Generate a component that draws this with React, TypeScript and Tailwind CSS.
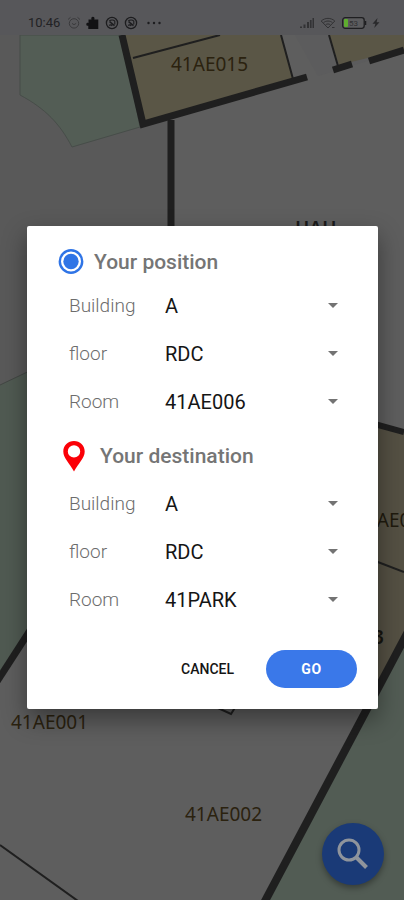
import React, { useState } from 'react';

interface PlaceFieldsProps {
  idPrefix: string;
  rooms: string[];
}

interface SelectRowProps {
  id: string;
  label: string;
  options: string[];
}

const SelectRow: React.FC<SelectRowProps> = ({ id, label, options }) => {
  const [value, setValue] = useState(options[0]);

  return (
    <div className="flex h-12 items-center pl-[42px] pr-8">
      <label htmlFor={id} className="w-24 shrink-0 text-[19px] font-light leading-6 text-[#6c6c6c]">
        {label}
      </label>
      <div className="relative flex-1">
        <select
          id={id}
          value={value}
          onChange={e => setValue(e.target.value)}
          className="h-10 w-full appearance-none bg-transparent text-[20px] leading-6 text-[#151515] outline-none"
        >
          {options.map(option => (
            <option key={option}>{option}</option>
          ))}
        </select>
        <svg
          viewBox="0 0 10 5"
          className="pointer-events-none absolute right-2 top-[17px] h-[5px] w-[10px]"
          fill="#737373"
          aria-hidden="true"
        >
          <path d="M0 0h10L5 5z" />
        </svg>
      </div>
    </div>
  );
};

const PlaceFields: React.FC<PlaceFieldsProps> = ({ idPrefix, rooms }) => (
  <div>
    <SelectRow id={`${idPrefix}-building`} label="Building" options={['A', 'B', 'C']} />
    <SelectRow id={`${idPrefix}-floor`} label="floor" options={['RDC', '1', '2']} />
    <SelectRow id={`${idPrefix}-room`} label="Room" options={rooms} />
  </div>
);

const CompassGlyph = () => (
  <svg viewBox="0 0 14 14" className="h-[14px] w-[14px]" fill="none" stroke="#1d1d1f" aria-hidden="true">
    <circle cx="7" cy="7" r="5.6" strokeWidth="1.3" />
    <path d="M4.2 5.2C5.6 3.6 8.6 3.6 9.8 5.2V8.5" strokeWidth="1.1" />
    <path d="M4.6 5.6L9.5 9.6M4.2 9.6C5.2 8.6 6.4 8.6 7.2 9.8" strokeWidth="1.4" />
  </svg>
);

const StatusBar = () => (
  <header className="flex h-[35px] items-center justify-between bg-[#57575a] pl-7 pr-6 pt-[11px]">
    <div className="flex items-center gap-[5px]">
      <span className="text-[13px] leading-4 text-[#222224]">10:46</span>
      <svg viewBox="0 0 14 14" className="ml-[2px] h-[14px] w-[14px]" fill="none" stroke="#3a3a3c" aria-hidden="true">
        <circle cx="7" cy="7.4" r="4.7" />
        <path d="M1 3.5L3.5 1.3M13 3.5L10.5 1.3M5 7.4l2 1.3 2.2-1.3" />
      </svg>
      <svg viewBox="0 0 14 14" className="h-[14px] w-[14px]" fill="#121214" aria-hidden="true">
        <path d="M2.5 3.5h3C4.8 1.8 5.7.8 6.9.8s2.1 1 1.4 2.7h4V13h-10V9.8C.9 10 .3 9.2.3 8.2S1 6.6 2.5 6.9z" />
      </svg>
      <CompassGlyph />
      <CompassGlyph />
      <svg viewBox="0 0 14 14" className="ml-1 h-[14px] w-[14px]" fill="#1d1d1f" aria-hidden="true">
        <circle cx="1.5" cy="7" r="1.2" />
        <circle cx="7" cy="7" r="1.2" />
        <circle cx="12.5" cy="7" r="1.2" />
      </svg>
    </div>
    <div className="flex items-center gap-[5px]">
      <svg viewBox="0 0 16 14" className="h-[14px] w-4" fill="#323234" aria-hidden="true">
        <path d="M1 10.5h2V12H1zM4.5 8.5h2V12h-2zM8 6h2v6H8zM10.9 4h1.7v8h-1.7zM13.5 2H15v10h-1.5z" />
      </svg>
      <svg viewBox="0 0 16 14" className="h-[14px] w-4" fill="none" stroke="#323234" aria-hidden="true">
        <path d="M1.2 5C5 1.5 11 1.5 14.8 5L8 12z" />
        <path d="M3.5 6.7C6 4.5 10 4.5 12.5 6.7M5.6 8.9C7 7.6 9 7.6 10.4 8.9" />
        <path d="M12 11.5h2.5" />
      </svg>
      <svg viewBox="0 0 26 14" className="h-[14px] w-[26px]" aria-hidden="true">
        <rect x="1.7" y="1.7" width="21.5" height="10.6" rx="2.5" fill="#5c5c5e" stroke="#1f1f21" strokeWidth="1.3" />
        <rect x="3" y="3" width="4" height="8" rx="1" fill="#5fae2f" />
        <path d="M24.5 5v4" stroke="#1f1f21" strokeWidth="1.5" />
        <text x="8" y="10" fontSize="8" fill="#303032">53</text>
      </svg>
      <svg viewBox="0 0 8 12" className="h-3 w-2" fill="#29292b" aria-hidden="true">
        <path d="M5.5 1L.5 6.8h2.9L2.2 11 7.5 5.3H4.6z" />
      </svg>
    </div>
  </header>
);

// Floor plan, drawn in its dimmed state behind the dialog
const FloorPlan = () => (
  <svg
    viewBox="0 35 404 865"
    preserveAspectRatio="xMidYMid slice"
    className="absolute inset-0 h-full w-full"
    aria-hidden="true"
  >
    <rect y="35" width="404" height="865" fill="#5e5e5e" />
    <path d="M0 35H170V230H40V620L0 680z" fill="#595959" />
    <path d="M295 35H404V50L318 76z" fill="#5c5c5d" />

    <path d="M20 35H122L140 127L72 147C60 124 46 109 20 95z" fill="#535d55" stroke="#474d49" />
    <path d="M0 385L40 366V620L0 680z" fill="#505a52" />
    <path d="M0 385L40 366" stroke="#434744" fill="none" />
    <path d="M404 644V900H268z" fill="#525c54" />

    <path d="M122 35H281L293 79L143 124z" fill="#5a5646" />
    <path d="M329 35H404V49L339 65z" fill="#5a5646" />
    <path d="M360 420L404 432V640L370 705H360z" fill="#545043" />

    <g fill="none" stroke="#1f1f1f">
      <path d="M122 35L143 124L307 77" strokeWidth="7" />
      <path d="M171 120V240" strokeWidth="7" />
      <path d="M333 70L352 64M369 61L404 50" strokeWidth="7" />
      <path d="M133 58L220 35M281 35L293 79M329 35L338 66" strokeWidth="2" />
      <path d="M360 420L404 432" strokeWidth="6" />
      <path d="M370 559L404 572" strokeWidth="2" />
      <path d="M40 615L-4 683" strokeWidth="7" />
      <path d="M410 628L264 903" strokeWidth="8" />
      <path d="M0 845L78 901" strokeWidth="2" />
      <path d="M218 708L231 714L236 706" strokeWidth="2" />
    </g>

    <g fontFamily="Noto Sans, sans-serif" fontSize="19" fill="#2b220f">
      <text x="171" y="71">41AE015</text>
      <text x="11" y="729">41AE001</text>
      <text x="185" y="821">41AE002</text>
      <text x="355" y="527" fill="#1f1a0e">41AE004</text>
      <text x="373" y="644" fontWeight="600" fill="#17150f">3</text>
      <text x="295" y="235" fontWeight="600" fill="#1a1a1a">HAU</text>
    </g>
  </svg>
);

const App: React.FC = () => {
  return (
    <div className="flex min-h-screen flex-col bg-[#5e5e5e] font-[Roboto,sans-serif]">
      <StatusBar />

      <main className="relative flex flex-1 items-center overflow-hidden pl-[27px] pr-[26px]">
        <FloorPlan />

        <button
          type="button"
          aria-label="Search"
          className="absolute bottom-[15px] right-5 flex h-[62px] w-[62px] items-center justify-center rounded-full bg-[#1a3a77] shadow-[0_3px_6px_rgba(0,0,0,0.35)]"
        >
          <svg viewBox="0 0 32 32" className="h-8 w-8" fill="none" stroke="#8f949c" aria-hidden="true">
            <circle cx="12" cy="12" r="10" strokeWidth="3" />
            <path d="M19 19L29.5 29.5" strokeWidth="4" />
          </svg>
        </button>

        <form
          role="dialog"
          aria-label="Route"
          onSubmit={e => e.preventDefault()}
          className="relative w-full rounded-[2px] bg-white pb-[21px] pt-4 shadow-[0_10px_24px_rgba(0,0,0,0.4)]"
        >
          <section>
            <h2 className="flex h-10 items-center gap-[10px] pl-[31px] text-[21px] font-medium leading-6 text-[#757575]">
              <svg viewBox="0 0 26 26" className="h-[26px] w-[26px]" aria-hidden="true">
                <circle cx="13" cy="12.5" r="11.2" fill="none" stroke="#2f74e6" strokeWidth="2.4" />
                <circle cx="13" cy="12.5" r="7.7" fill="#2f74e6" />
              </svg>
              Your position
            </h2>
            <PlaceFields idPrefix="position" rooms={['41AE006', '41AE001', '41AE002', '41AE015']} />
          </section>

          <section className="mt-[10px] flex flex-col gap-1">
            <h2 className="flex h-10 items-center gap-[10px] pl-[31px] text-[21px] font-medium leading-6 text-[#757575]">
              <svg viewBox="0 0 32 32" className="h-8 w-8" fill="#fb0007" fillRule="evenodd" aria-hidden="true">
                <path d="M16 1C10 1 5.3 5.6 5.3 11.5C5.3 18 11.5 23 16 31.5C20.5 23 26.7 18 26.7 11.5C26.7 5.6 22 1 16 1ZM16 5.2A6.2 6.2 0 1 1 16 17.6A6.2 6.2 0 1 1 16 5.2Z" />
              </svg>
              Your destination
            </h2>
            <PlaceFields idPrefix="destination" rooms={['41PARK', '41AE001', '41AE002', '41AE015']} />
          </section>

          <div className="mt-[26px] flex items-center justify-end gap-4 pr-[21px]">
            <button type="button" className="h-[38px] px-4 text-[14px] font-medium leading-5 text-[#151515]">
              CANCEL
            </button>
            <button
              type="submit"
              className="h-[38px] w-[91px] rounded-full bg-[#3a78e9] text-[14px] font-bold leading-5 tracking-wider text-white"
            >
              GO
            </button>
          </div>
        </form>
      </main>
    </div>
  );
};

export default App;
